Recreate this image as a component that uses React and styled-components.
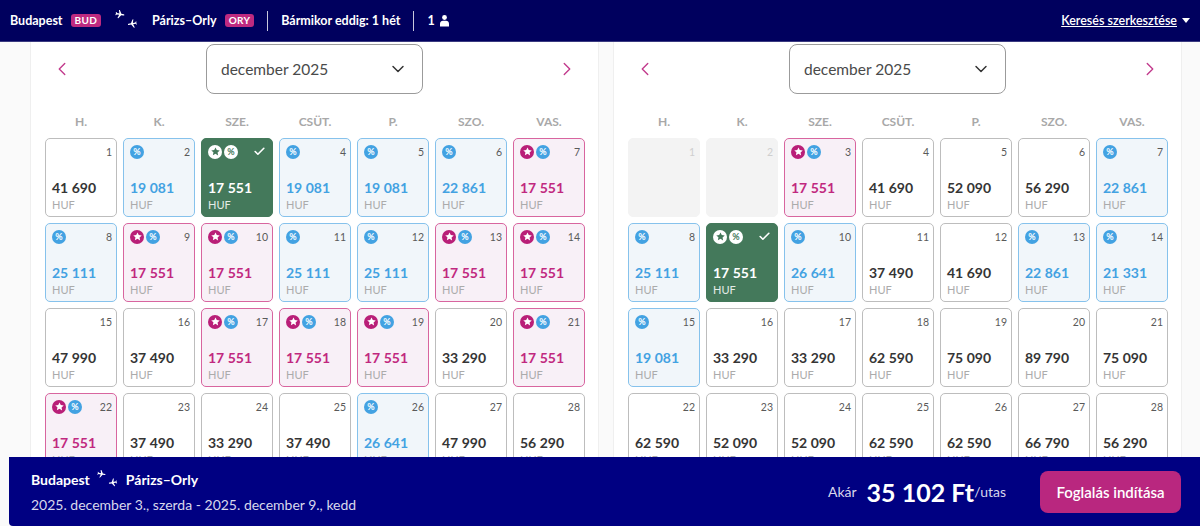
import styled, { createGlobalStyle } from "styled-components";
import { ChevronDown, ChevronLeft, ChevronRight, Check } from "lucide-react";

const GlobalStyle = createGlobalStyle`
    html, body{
        margin: 0;
        height: 100%;
        overflow: hidden;
        background-color: #FAFAFA;
        font-family: "Lato", "Noto Sans", sans-serif;
    }
    *{
        box-sizing: border-box;
    }
`;

const WEEK_DAYS = ["H.", "K.", "SZE.", "CSÜT.", "P.", "SZO.", "VAS."];

const LEFT_MONTH = [
    ["plain", "41 690"], ["blue", "19 081"], ["selected", "17 551"], ["blue", "19 081"], ["blue", "19 081"], ["blue", "22 861"], ["pink", "17 551"],
    ["blue", "25 111"], ["pink", "17 551"], ["pink", "17 551"], ["blue", "25 111"], ["blue", "25 111"], ["pink", "17 551"], ["pink", "17 551"],
    ["plain", "47 990"], ["plain", "37 490"], ["pink", "17 551"], ["pink", "17 551"], ["pink", "17 551"], ["plain", "33 290"], ["pink", "17 551"],
    ["pink", "17 551"], ["plain", "37 490"], ["plain", "33 290"], ["plain", "37 490"], ["blue", "26 641"], ["plain", "47 990"], ["plain", "56 290"],
];

const RIGHT_MONTH = [
    ["disabled", ""], ["disabled", ""], ["pink", "17 551"], ["plain", "41 690"], ["plain", "52 090"], ["plain", "56 290"], ["blue", "22 861"],
    ["blue", "25 111"], ["selected", "17 551"], ["blue", "26 641"], ["plain", "37 490"], ["plain", "41 690"], ["blue", "22 861"], ["blue", "21 331"],
    ["blue", "19 081"], ["plain", "33 290"], ["plain", "33 290"], ["plain", "62 590"], ["plain", "75 090"], ["plain", "89 790"], ["plain", "75 090"],
    ["plain", "62 590"], ["plain", "52 090"], ["plain", "52 090"], ["plain", "62 590"], ["plain", "62 590"], ["plain", "66 790"], ["plain", "56 290"],
];

const CELL_THEME = {
    plain: { border: "#BDBDBD", background: "#FFFFFF", price: "#353535", day: "#5A5A5A", unit: "#ABABAB" },
    blue: { border: "#86C2EC", background: "#F1F6FA", price: "#43A2E2", day: "#5A5A5A", unit: "#ABABAB" },
    pink: { border: "#D8659F", background: "#F8F0F7", price: "#C1287F", day: "#5A5A5A", unit: "#ABABAB" },
    selected: { border: "#44795B", background: "#44795B", price: "#FFFFFF", day: "#FFFFFF", unit: "#E4ECE7" },
    disabled: { border: "#F3F3F3", background: "#F3F3F3", price: "#FFFFFF", day: "#CFCFCF", unit: "#CFCFCF" },
};

function Planes({ size = 24 }){
    const flight = "M21 16v-2l-8-5V3.5c0-.83-.67-1.5-1.5-1.5S10 2.67 10 3.5V9l-8 5v2l8-2.5V19l-2 1.5V22l3.5-1 3.5 1v-1.5L13 19v-5.5l8 2.5z";
    return (
        <svg width={size} height={size * 0.86} viewBox="0 0 28 24" fill="#FFFFFF">
            <path d={flight} transform="translate(0 -1) rotate(100 6 6) scale(.52)" />
            <path d={flight} transform="translate(14 10) rotate(-100 6 6) scale(.52)" />
        </svg>
    );
}

function Person(){
    return (
        <svg width="9" height="12" viewBox="0 0 9 12" fill="#FFFFFF">
            <circle cx="4.5" cy="2.5" r="2.4" />
            <path d="M0 11.5V8.6C0 6.9 1.3 5.8 3 5.8h3c1.700 0 3 1.100 3 2.800v2.900z" />
        </svg>
    );
}

function StarBadge({ selected }){
    return (
        <Badge $bg={selected ? "#FFFFFF" : "#B91F78"}>
            <svg width="9" height="9" viewBox="0 0 24 24" fill={selected ? "#44795B" : "#FFFFFF"}>
                <path d="M12 1l3.400 7.300 7.900 1-5.800 5.500 1.500 7.900L12 18l-7 3.700 1.500-7.900L.7 9.300l7.900-1z" />
            </svg>
        </Badge>
    );
}

function PercentBadge({ selected }){
    return <Badge $bg={selected ? "#FFFFFF" : "#43A2E2"} $color={selected ? "#44795B" : "#FFFFFF"}>%</Badge>;
}

function DayCell({ day, kind, price }){
    const selected = kind === "selected";
    const hasStar = selected || kind === "pink";
    const hasPercent = hasStar || kind === "blue";

    return (
        <Cell $kind={kind}>
            <CellTop>
                <Badges>
                    {hasStar && <StarBadge selected={selected} />}
                    {hasPercent && <PercentBadge selected={selected} />}
                </Badges>
                {selected ? <Check size={13} color="#FFFFFF" strokeWidth={3} /> : <DayNumber $kind={kind}>{day}</DayNumber>}
            </CellTop>
            {price && (
                <>
                    <Price $kind={kind}>{price}</Price>
                    <Unit $kind={kind}>HUF</Unit>
                </>
            )}
        </Cell>
    );
}

function Month({ days }){
    return (
        <Panel>
            <MonthHead>
                <NavArrow><ChevronLeft size={22} strokeWidth={1.5} /></NavArrow>
                <MonthSelect>
                    december 2025
                    <ChevronDown size={20} strokeWidth={1.75} color="#333333" />
                </MonthSelect>
                <NavArrow><ChevronRight size={22} strokeWidth={1.5} /></NavArrow>
            </MonthHead>
            <WeekRow>
                {WEEK_DAYS.map((name) => <WeekDay key={name}>{name}</WeekDay>)}
            </WeekRow>
            <DaysGrid>
                {days.map(([kind, price], index) => (
                    <DayCell key={index} day={index + 1} kind={kind} price={price} />
                ))}
            </DaysGrid>
        </Panel>
    );
}

export default function App(){
    return (
        <Page>
            <GlobalStyle />
            <TopBar>
                <Trip>
                    <span>Budapest</span>
                    <Code>BUD</Code>
                    <PlanesSlot><Planes /></PlanesSlot>
                    <span>Párizs–Orly</span>
                    <Code>ORY</Code>
                    <Divider />
                    <span>Bármikor eddig: 1 hét</span>
                    <Divider />
                    <Passengers>1 <Person /></Passengers>
                </Trip>
                <EditSearch>
                    <u>Keresés szerkesztése</u>
                    <Caret />
                </EditSearch>
            </TopBar>
            <Months>
                <Month days={LEFT_MONTH} />
                <Month days={RIGHT_MONTH} />
            </Months>
            <Summary>
                <div>
                    <Route>
                        Budapest
                        <Planes size={22} />
                        Párizs–Orly
                    </Route>
                    <Dates>2025. december 3., szerda - 2025. december 9., kedd</Dates>
                </div>
                <PriceBox>
                    <Small>Akár</Small>
                    <BigPrice>35 102 Ft</BigPrice>
                    <Small>/utas</Small>
                    <BookButton>Foglalás indítása</BookButton>
                </PriceBox>
            </Summary>
        </Page>
    );
}

const Page = styled.div`
    width: 1200px;
    height: 526px;
    overflow: hidden;
    position: relative;
    background-color: #FAFAFA;
`;

const TopBar = styled.header`
    height: 42px;
    padding: 0 10px;
    display: flex;
    align-items: center;
    justify-content: space-between;
    background-color: #00005E;
    border-bottom: 1px solid #3A3A80;
    color: #FFFFFF;
    font-size: 12.5px;
    font-weight: 700;
`;

const Trip = styled.div`
    display: flex;
    align-items: center;
`;

const Code = styled.span`
    margin-left: 8px;
    padding: 0 4px;
    height: 13px;
    line-height: 13px;
    border-radius: 3px;
    background-color: #BE2A80;
    font-size: 10px;
    letter-spacing: .3px;
`;

const PlanesSlot = styled.span`
    display: flex;
    margin: 0 13px 0 14px;
`;

const Divider = styled.span`
    width: 1px;
    height: 20px;
    margin: 0 13px;
    background-color: #C8C8DC;
`;

const Passengers = styled.span`
    display: flex;
    align-items: center;
    gap: 5px;
`;

const EditSearch = styled.div`
    display: flex;
    align-items: center;
    gap: 4px;
    font-weight: 600;
`;

const Caret = styled.span`
    width: 0;
    height: 0;
    margin-left: 1px;
    border-left: 4px solid transparent;
    border-right: 4px solid transparent;
    border-top: 5px solid #FFFFFF;
`;

const Months = styled.main`
    display: flex;
    gap: 14px;
    padding-left: 30px;
`;

const Panel = styled.section`
    width: 569px;
    height: 484px;
    padding: 2px 14px 0;
    background-color: #FFFFFF;
    border-left: 1px solid #EFEFEF;
    border-right: 1px solid #EFEFEF;
`;

const MonthHead = styled.div`
    display: flex;
    align-items: center;
    justify-content: space-between;
    padding: 0 6px;
`;

const NavArrow = styled.span`
    display: flex;
    color: #C23A8C;
`;

const MonthSelect = styled.div`
    width: 217px;
    height: 50px;
    padding: 0 14px;
    display: flex;
    align-items: center;
    justify-content: space-between;
    border: 1px solid #9B9B9B;
    border-radius: 8px;
    color: #4A4A4A;
    font-size: 15.5px;
`;

const WeekRow = styled.div`
    display: grid;
    grid-template-columns: repeat(7, 72px);
    column-gap: 6px;
    margin-top: 20px;
`;

const WeekDay = styled.div`
    height: 16px;
    line-height: 16px;
    text-align: center;
    color: #A8A8A8;
    font-size: 12px;
    font-weight: 700;
`;

const DaysGrid = styled.div`
    display: grid;
    grid-template-columns: repeat(7, 72px);
    grid-auto-rows: 79px;
    gap: 6px;
    margin-top: 8px;
`;

const Cell = styled.div`
    padding: 5px 6px 0;
    border: 1px solid ${({ $kind }) => CELL_THEME[$kind].border};
    border-radius: 5px;
    background-color: ${({ $kind }) => CELL_THEME[$kind].background};
`;

const CellTop = styled.div`
    height: 15px;
    display: flex;
    align-items: center;
    justify-content: space-between;
`;

const Badges = styled.div`
    display: flex;
    gap: 2px;
`;

const Badge = styled.span`
    width: 14px;
    height: 14px;
    display: flex;
    align-items: center;
    justify-content: center;
    border-radius: 50%;
    background-color: ${({ $bg }) => $bg};
    color: ${({ $color }) => $color};
    font-size: 9px;
    font-weight: 700;
`;

const DayNumber = styled.span`
    margin-right: -2px;
    color: ${({ $kind }) => CELL_THEME[$kind].day};
    font-size: 10.5px;
`;

const Price = styled.div`
    margin-top: 20px;
    color: ${({ $kind }) => CELL_THEME[$kind].price};
    font-size: 14px;
    font-weight: 700;
    line-height: 18px;
`;

const Unit = styled.div`
    color: ${({ $kind }) => CELL_THEME[$kind].unit};
    font-size: 11px;
    line-height: 16px;
`;

const Summary = styled.footer`
    position: absolute;
    left: 9px;
    right: 0;
    bottom: 0;
    height: 69px;
    padding: 0 19px 0 22px;
    display: flex;
    align-items: center;
    justify-content: space-between;
    border-bottom-left-radius: 4px;
    background-color: #000082;
    color: #FFFFFF;
`;

const Route = styled.div`
    display: flex;
    align-items: center;
    gap: 7px;
    font-size: 14px;
    font-weight: 700;
`;

const Dates = styled.div`
    margin-top: 7px;
    color: #D8D8EC;
    font-size: 14px;
`;

const PriceBox = styled.div`
    display: flex;
    align-items: center;
`;

const Small = styled.span`
    color: #D8D8EC;
    font-size: 14px;
`;

const BigPrice = styled.span`
    margin-left: 10px;
    font-size: 25px;
    font-weight: 700;
`;

const BookButton = styled.button`
    width: 141px;
    height: 42px;
    margin-left: 34px;
    border: none;
    border-radius: 8px;
    background-color: #B9277F;
    color: #FFFFFF;
    font-family: inherit;
    font-size: 15px;
    font-weight: 600;
`;
